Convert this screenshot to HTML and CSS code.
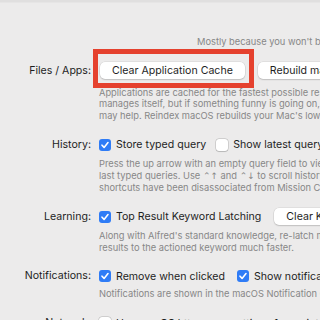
FILE: index.html
```html
<!DOCTYPE html>
<html lang="en">
<head>
<meta charset="utf-8">
<title>Advanced</title>
<link rel="stylesheet" href="styles.css">
</head>
<body>
<div class="window-edge"></div>
<main class="prefs">
  <p class="note">Mostly because you won't be able to find anything.</p>

  <section class="row row--cache">
    <div class="label">Files / Apps:</div>
    <div class="content">
      <div class="controls controls--buttons">
        <span class="highlight"><button class="btn">Clear Application Cache</button></span>
        <button class="btn">Rebuild macOS Metadata</button>
      </div>
      <p class="desc">Applications are cached for the fastest possible results. Alfred's cache<br>manages itself, but if something funny is going on, clearing the cache<br>may help. Reindex macOS rebuilds your Mac's low level metadata.</p>
    </div>
  </section>

  <section class="row">
    <div class="label">History:</div>
    <div class="content">
      <div class="controls controls--tight">
        <label class="option"><span class="check check--on"><svg viewBox="0 0 12 12"><path d="M3 6.2 5.1 8.4 9 3.6"/></svg></span>Store typed query</label>
        <label class="option"><span class="check"></span>Show latest query if within 5 minutes</label>
      </div>
      <p class="desc">Press the up arrow with an empty query field to view your<br>last typed queries. Use <span class="keys">⌃↑</span> and <span class="keys">⌃↓</span> to scroll history. These<br>shortcuts have been disassociated from Mission Control.</p>
    </div>
  </section>

  <section class="row">
    <div class="label">Learning:</div>
    <div class="content">
      <div class="controls controls--buttons">
        <label class="option"><span class="check check--on"><svg viewBox="0 0 12 12"><path d="M3 6.2 5.1 8.4 9 3.6"/></svg></span>Top Result Keyword Latching</label>
        <button class="btn">Clear Knowledge</button>
      </div>
      <p class="desc">Along with Alfred's standard knowledge, re-latch most used<br>results to the actioned keyword much faster.</p>
    </div>
  </section>

  <section class="row row--notify">
    <div class="label">Notifications:</div>
    <div class="content">
      <div class="controls">
        <label class="option"><span class="check check--on"><svg viewBox="0 0 12 12"><path d="M3 6.2 5.1 8.4 9 3.6"/></svg></span>Remove when clicked</label>
        <label class="option"><span class="check check--on"><svg viewBox="0 0 12 12"><path d="M3 6.2 5.1 8.4 9 3.6"/></svg></span>Show notifications in Focus</label>
      </div>
      <p class="desc">Notifications are shown in the macOS Notification Centre.</p>
    </div>
  </section>

  <section class="row">
    <div class="label">Network:</div>
    <div class="content">
      <div class="controls">
        <label class="option"><span class="check"></span>Use macOS http proxy settings for scripts</label>
      </div>
    </div>
  </section>
</main>
</body>
</html>
```

FILE: styles.css
```css
html, body {
  margin: 0;
  padding: 0;
}

body {
  width: 320px;
  height: 320px;
  overflow: hidden;
  background: #ecebeb;
  color: #1e1e1e;
  font-family: Inter, "Liberation Sans", "DejaVu Sans", sans-serif;
}

.window-edge {
  height: 3px;
  background: #e0dfdf;
  border-bottom: 1px solid #e6e5e5;
  box-sizing: border-box;
}

.prefs {
  padding-top: 33px;
}

.note {
  margin: 0 0 14px 197px;
  font-size: 9.3px;
  line-height: 11.7px;
  color: #878787;
  white-space: nowrap;
}

.row {
  display: grid;
  grid-template-columns: 91px max-content;
  column-gap: 8px;
  margin-bottom: 14px;
}

.label {
  text-align: right;
  font-size: 10.6px;
  line-height: 18px;
  white-space: nowrap;
}

.controls {
  display: flex;
  align-items: center;
  gap: 12px;
  height: 18px;
  white-space: nowrap;
  font-size: 10.6px;
}

.controls--tight {
  gap: 10px;
}

.controls--buttons {
  gap: 13px;
}

.btn {
  height: 17px;
  padding: 0 12px;
  border: 0;
  border-radius: 5px;
  background: #ffffff;
  color: #1e1e1e;
  font: inherit;
  font-size: 10.6px;
  box-shadow: 0 0 0 0.5px rgba(0, 0, 0, 0.1), 0 1px 1.5px rgba(0, 0, 0, 0.14);
}

.highlight {
  position: relative;
  display: inline-flex;
  margin-left: 1px;
}

.highlight::after {
  content: "";
  position: absolute;
  left: -7px;
  right: -9px;
  top: -13px;
  bottom: -9px;
  border: 5px solid #e5412e;
  pointer-events: none;
}

.option {
  display: inline-flex;
  align-items: center;
  gap: 5px;
}

.check {
  flex: none;
  width: 12px;
  height: 12px;
  border-radius: 3px;
  background: #ffffff;
  box-shadow: 0 0 0 0.5px rgba(0, 0, 0, 0.22), 0 0.5px 1px rgba(0, 0, 0, 0.12);
  display: inline-flex;
}

.check--on {
  background: #2f7cf6;
  box-shadow: none;
}

.check svg {
  width: 12px;
  height: 12px;
}

.check svg path {
  fill: none;
  stroke: #ffffff;
  stroke-width: 1.6;
  stroke-linecap: round;
  stroke-linejoin: round;
}

.desc {
  margin: 4px 0 0;
  font-size: 9.3px;
  line-height: 11.7px;
  color: #878787;
  white-space: nowrap;
}

.row--cache .desc {
  margin-top: 7px;
}

.row--notify .desc {
  margin-top: 3px;
}

.keys {
  font-family: "DejaVu Sans", sans-serif;
  font-size: 9px;
}
```
